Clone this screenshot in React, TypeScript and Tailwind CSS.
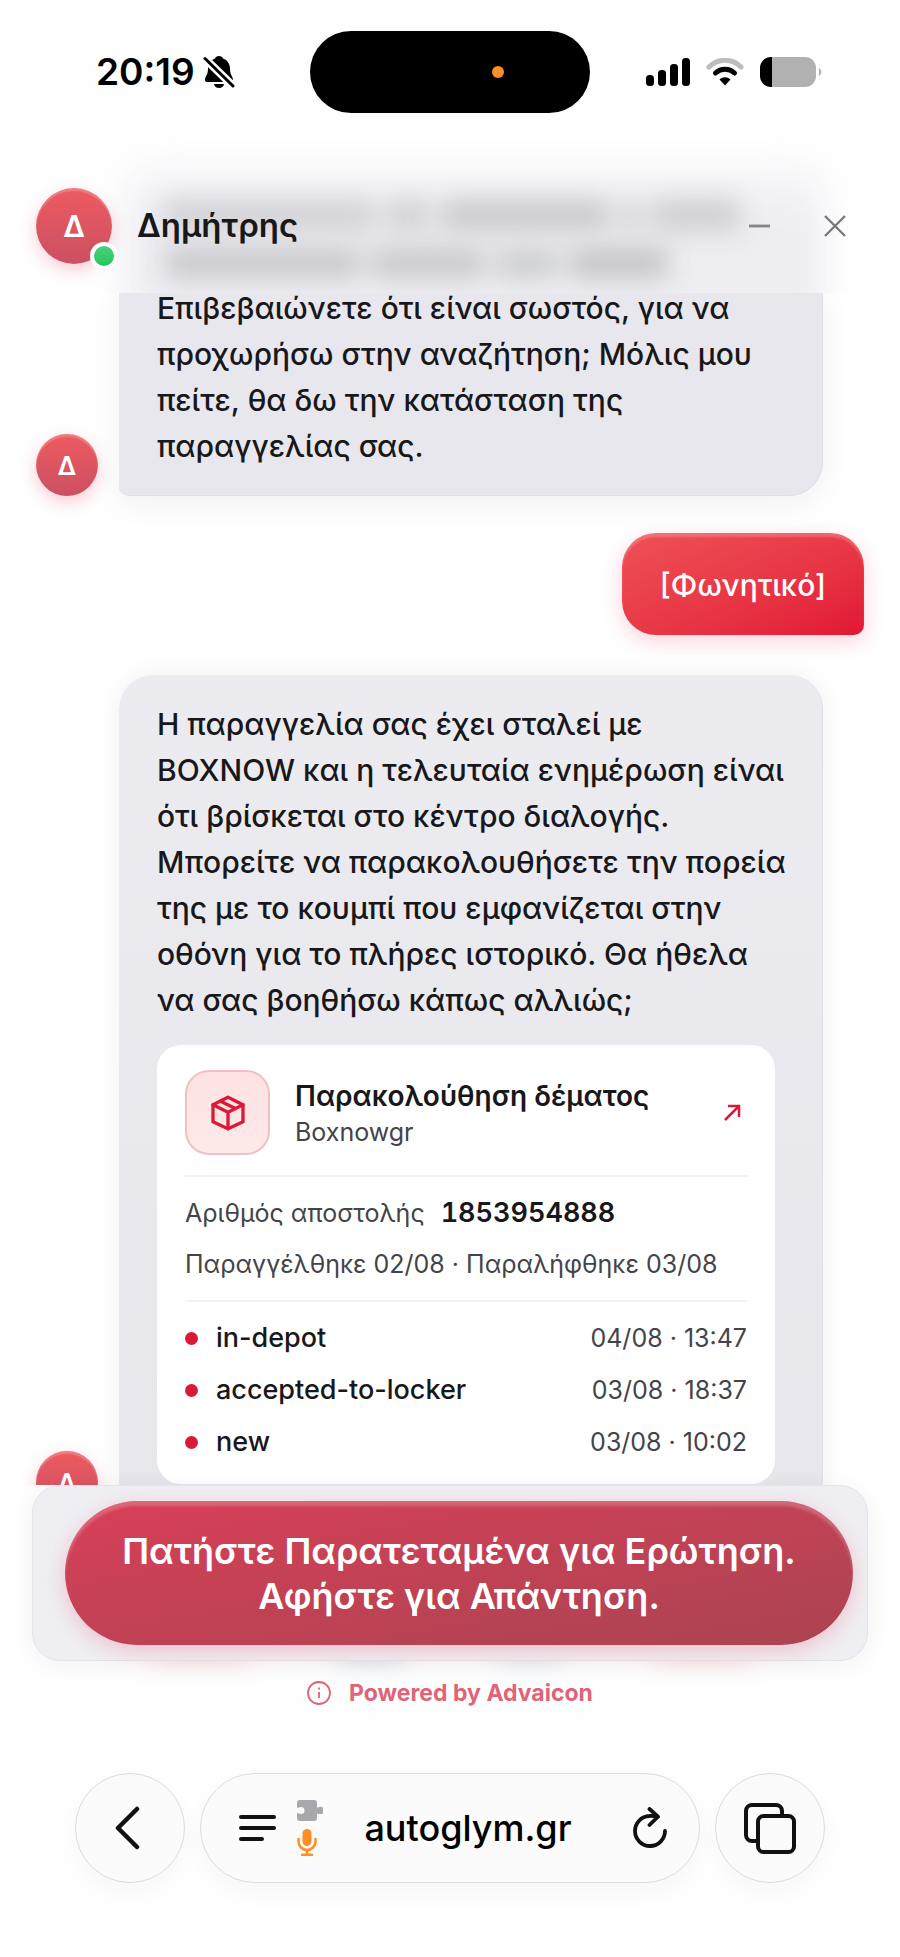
import React from "react";

const events = [
  { status: "in-depot", time: "04/08 · 13:47" },
  { status: "accepted-to-locker", time: "03/08 · 18:37" },
  { status: "new", time: "03/08 · 10:02" },
];

function StatusBar() {
  return (
    <div className="grid grid-cols-[1fr_auto_1fr] items-center pt-[31px]">
      <div className="flex items-center gap-2 pl-24">
        <span className="text-[37px] leading-[44px] font-semibold text-black">
          20:19
        </span>
        <svg width="32" height="34" viewBox="0 0 32 34" fill="black">
          <path d="M16 1c2 0 3.500 1 4 2.600 4.500 1.600 7 5.400 7 10.400 0 6 3 7.500 3 11 0 1.300-.7 2-2 2H4c-1.300 0-2-.8-2-2 0-3.500 3-5 3-11 0-5 2.500-8.800 7-10.400C12.500 2 14 1 16 1Z" />
          <path d="M11 29h10c-.4 2.500-2.400 4-5 4s-4.600-1.500-5-4Z" />
          <path d="M2 3.500 30 31" stroke="white" strokeWidth="8" />
          <path d="M2 3.500 30 31" stroke="black" strokeWidth="3" strokeLinecap="round" />
        </svg>
      </div>
      <div className="flex h-[82px] w-[280px] items-center justify-end rounded-full bg-black pr-[86px]">
        <span className="size-3 rounded-full bg-[#ff8d28]" />
      </div>
      <div className="flex items-center justify-end gap-4 pr-[78px]">
        <svg width="44" height="28" viewBox="0 0 44 28">
          <rect x="0" y="17" width="8" height="11" rx="3.500" />
          <rect x="12" y="12" width="8" height="16" rx="3.500" />
          <rect x="24" y="6" width="8" height="22" rx="3.500" />
          <rect x="36" y="0" width="8" height="28" rx="3.500" />
        </svg>
        <svg width="38" height="28" viewBox="0 0 38 28" fill="none">
          <path d="M3 9C12 0 26 0 35 9" stroke="#bdbdbd" strokeWidth="5" strokeLinecap="round" />
          <path d="M9.500 15c5.500-5 13.500-5 19 0" stroke="black" strokeWidth="5" strokeLinecap="round" />
          <path d="M13.500 21.500c3.300-3 7.700-3 11 0L19 27.500Z" fill="black" />
        </svg>
        <svg width="62" height="30" viewBox="0 0 62 30">
          <path d="M12 0v30h-1A11 11 0 0 1 0 19v-8A11 11 0 0 1 11 0Z" />
          <path d="M12 0h33a11 11 0 0 1 11 11v8a11 11 0 0 1-11 11H12Z" fill="#b1b1b1" />
          <path d="M59 11c3 1.500 3 6.500 0 8Z" fill="#b1b1b1" />
        </svg>
      </div>
    </div>
  );
}

function Avatar() {
  return (
    <div className="flex size-[62px] shrink-0 items-center justify-center rounded-full bg-linear-to-b from-[#ee5a60] to-[#cb5062] text-[26px] font-semibold text-white shadow-[inset_0_3px_1px_rgba(255,255,255,0.2),0_6px_16px_rgba(240,60,90,0.25)]">
      Δ
    </div>
  );
}

function ChatHeader() {
  return (
    <header className="relative z-10 flex h-[134px] items-center bg-[#fefefe] pr-[47px] pl-9">
      {/* message that has scrolled under the frosted bar */}
      <div className="absolute inset-x-0 -top-6 bottom-0 overflow-hidden" aria-hidden="true">
        <div className="absolute top-7 right-[78px] -bottom-6 left-[126px] rounded-t-[30px] bg-linear-to-b from-[#f8f8fa] to-[#ededf2] to-40% blur-[16px]" />
        <div className="absolute top-[64px] left-[164px] flex h-[32px] gap-3 blur-[12px]">
          <span className="w-[210px] bg-[#d2d2d6]" />
          <span className="w-[44px] bg-[#d2d2d6]" />
          <span className="w-[166px] bg-[#cacace]" />
          <span className="w-[20px] bg-[#d2d2d6]" />
          <span className="w-[88px] bg-[#cfcfd3]" />
        </div>
        <div className="absolute top-[112px] left-[166px] flex h-[32px] gap-3 blur-[12px]">
          <span className="w-[194px] bg-[#cacace]" />
          <span className="w-[112px] bg-[#cacace]" />
          <span className="w-[62px] bg-[#cecfd2]" />
          <span className="w-[98px] bg-[#c6c6ca]" />
        </div>
      </div>
      <div className="relative">
        <div className="flex size-[76px] items-center justify-center rounded-full bg-linear-to-b from-[#ee5a60] to-[#cb5062] text-[30px] font-semibold text-white shadow-[inset_0_3px_1px_rgba(255,255,255,0.2),0_6px_16px_rgba(240,60,90,0.25)]">
          Δ
        </div>
        <span className="absolute -right-[6px] -bottom-[6px] size-7 rounded-full border-4 border-white bg-linear-to-b from-[#4bd07c] to-[#22c55e]" />
      </div>
      <h1 className="relative ml-[25px] flex-1 text-[33px] font-semibold text-[#18181b]">
        Δημήτρης
      </h1>
      <div className="relative flex items-center gap-10">
        <button aria-label="Minimize" className="p-1">
          <svg width="28" height="28" viewBox="0 0 28 28" stroke="#858585" strokeWidth="2.800">
            <path d="M4 14h21" />
          </svg>
        </button>
        <button aria-label="Close" className="p-1">
          <svg width="28" height="28" viewBox="0 0 28 28" stroke="#777" strokeWidth="2.300">
            <path d="m4 4 20 20M24 4 4 24" />
          </svg>
        </button>
      </div>
    </header>
  );
}

function TrackingCard() {
  return (
    <div className="mt-[22px] mr-[13px] rounded-[24px] bg-white px-7 pt-[25px] pb-4 font-normal">
      <div className="flex items-center pb-5">
        <div className="flex size-[85px] items-center justify-center rounded-[24px] border-2 border-[#f3bfc4] bg-linear-to-b from-[#fee2e2] to-[#feeaea]">
          <svg
            width="40"
            height="40"
            viewBox="0 0 24 24"
            fill="none"
            stroke="#dc1838"
            strokeWidth="2"
            strokeLinejoin="round"
            strokeLinecap="round"
          >
            <path d="M12 2.500 21 7v10.300L12 21.500 3 17.300V7Z" />
            <path d="m3 7 9 4.500L21 7M12 11.500v10M7.500 4.900l9 4.400" />
          </svg>
        </div>
        <div className="ml-[25px] flex-1">
          <h2 className="text-[28px] leading-[38px] font-semibold text-[#18181b]">
            Παρακολούθηση δέματος
          </h2>
          <p className="text-[25px] leading-[34px] text-[#444448]">Boxnowgr</p>
        </div>
        <a href="#" aria-label="Άνοιγμα" className="mr-[6px]">
          <svg width="18" height="18" viewBox="0 0 18 18" fill="none" stroke="#dc1838" strokeWidth="2.500">
            <path d="M2 16 16 2M5 2h11v11" />
          </svg>
        </a>
      </div>
      <div className="flex flex-col gap-[15px] border-y-2 border-[#f1f1f3] py-[18px] text-[25px] leading-[36px] text-[#444448]">
        <p>
          Αριθμός αποστολής
          <strong className="ml-4 text-[27px] font-semibold text-[#18181b] tabular-nums">
            1853954888
          </strong>
        </p>
        <p>Παραγγέλθηκε 02/08 · Παραλήφθηκε 03/08</p>
      </div>
      <ul className="pt-[10px]">
        {events.map((e) => (
          <li key={e.status} className="flex h-[52px] items-center">
            <span className="size-[13px] rounded-full bg-[#dc1838]" />
            <span className="ml-[18px] flex-1 text-[27px] font-medium text-[#18181b]">
              {e.status}
            </span>
            <time className="text-[25px] text-[#444448]">{e.time}</time>
          </li>
        ))}
      </ul>
    </div>
  );
}

function BrowserBar() {
  return (
    <nav className="mx-auto flex w-full max-w-[750px] gap-[15px]">
      <button
        aria-label="Back"
        className="flex size-[110px] shrink-0 items-center justify-center rounded-full border border-[#dcdcdc] bg-[#fbfbfb] shadow-[0_10px_24px_rgba(0,0,0,0.03)]"
      >
        <svg width="30" height="44" viewBox="0 0 30 44" fill="none" stroke="#111" strokeWidth="4.500" strokeLinecap="round" strokeLinejoin="round">
          <path d="M22 3 3 22l19 19" />
        </svg>
      </button>
      <div className="flex h-[110px] flex-1 items-center rounded-full border border-[#dcdcdc] bg-[#fbfbfb] pr-8 pl-[38px] shadow-[0_10px_24px_rgba(0,0,0,0.03)]">
        <button aria-label="Page menu">
          <svg width="37" height="28" viewBox="0 0 37 28" stroke="#111" strokeWidth="4" strokeLinecap="round">
            <path d="M2 3h33M2 14h33M2 25h21" />
          </svg>
        </button>
        <div className="ml-[21px] flex flex-col gap-2">
          <svg width="26" height="21" viewBox="0 0 26 21" fill="#a8a8ac">
            <path d="M3 0h14a3 3 0 0 1 3 3v4.500c1 .4 1.500-.8 3-.8a3.500 3.500 0 0 1 0 7.600c-1.500 0-2-1.200-3-.8V18a3 3 0 0 1-3 3H3a3 3 0 0 1-3-3v-4.800c1.300-.5 2 .8 4 .8a3.500 3.500 0 0 0 0-7C2 7 1.300 8.200 0 7.700V3a3 3 0 0 1 3-3Z" />
          </svg>
          <svg width="20" height="27" viewBox="0 0 20 27" fill="none" stroke="#ff8d28" strokeWidth="2.500" strokeLinecap="round">
            <rect x="5.500" y="0" width="9" height="17" rx="4.500" fill="#ff8d28" stroke="none" />
            <path d="M1.500 10v2.500a8.500 8.500 0 0 0 17 0V10M10 21v4.500M5 25.700h10" />
          </svg>
        </div>
        <span className="flex-1 pr-5 text-center text-[36px] font-medium text-black">
          autoglym.gr
        </span>
        <button aria-label="Reload">
          <svg width="34" height="42" viewBox="0 0 34 42" fill="none" stroke="#111" strokeWidth="3.800" strokeLinecap="round" strokeLinejoin="round">
            <path d="M24 9.600c-3-.6-5-.8-7.500-.6A15 15 0 1 0 32 24M16.500 2l8.500 7.700-8.500 8.300" />
          </svg>
        </button>
      </div>
      <button
        aria-label="Tabs"
        className="flex size-[110px] shrink-0 items-center justify-center rounded-full border border-[#dcdcdc] bg-[#fbfbfb] shadow-[0_10px_24px_rgba(0,0,0,0.03)]"
      >
        <svg width="52" height="51" viewBox="0 0 52 51" fill="none" stroke="#111" strokeWidth="4" strokeLinejoin="round">
          <path d="M13 38H8A6 6 0 0 1 2 32V8a6 6 0 0 1 6-6h24a6 6 0 0 1 6 6v4" />
          <rect x="14" y="13" width="36" height="36" rx="5.500" />
        </svg>
      </button>
    </nav>
  );
}

export default function App() {
  return (
    <div className="min-h-screen bg-[#fefefe] pb-[75px] font-['Inter',sans-serif]">
      <StatusBar />
      <div className="h-[46px]" />
      <ChatHeader />

      <main className="-mt-2 h-[1200px] overflow-hidden px-9">
        <div className="flex items-end gap-[21px]">
          <Avatar />
          <div className="mr-[41px] flex-1 rounded-br-[34px] rounded-bl-[10px] border-r border-b border-[#dedee3] bg-[#e8e7ed] pr-[34px] pb-[26px] pl-[38px] text-[30px] leading-[46px] font-medium text-[#18181b] shadow-[0_8px_30px_rgba(0,0,0,0.05)]">
            Επιβεβαιώνετε ότι είναι σωστός, για να προχωρήσω στην αναζήτηση;
            Μόλις μου πείτε, θα δω την κατάσταση της παραγγελίας σας.
          </div>
        </div>

        <div className="mt-[37px] flex justify-end">
          <div className="rounded-[34px] rounded-br-[10px] bg-linear-to-br from-[#ef5057] to-[#e21535] px-[38px] pt-[29px] pb-[27px] text-[30px] leading-[46px] font-medium text-white shadow-[inset_0_4px_2px_rgba(255,255,255,0.2),0_6px_20px_rgba(240,40,80,0.2)]">
            [Φωνητικό]
          </div>
        </div>

        <div className="mt-10 flex items-end gap-[21px]">
          <Avatar />
          <div className="mr-[41px] flex-1 rounded-[34px] rounded-bl-[10px] border-r border-[#dedee3] bg-linear-to-b from-[#ecebf0] to-[#e7e6ec] pt-[26px] pr-[34px] pb-[29px] pl-[38px] text-[30px] leading-[46px] font-medium text-[#18181b] shadow-[0_0_24px_rgba(0,0,0,0.05)]">
            Η παραγγελία σας έχει σταλεί με BOXNOW και η τελευταία ενημέρωση
            είναι ότι βρίσκεται στο κέντρο διαλογής. Μπορείτε να
            παρακολουθήσετε την πορεία της με το κουμπί που εμφανίζεται στην
            οθόνη για το πλήρες ιστορικό. Θα ήθελα να σας βοηθήσω κάπως αλλιώς;
            <TrackingCard />
          </div>
        </div>
      </main>

      <footer className="relative px-8">
        {/* soft glow that shows below the panel */}
        <div className="absolute inset-x-[150px] top-[140px] flex h-9 justify-between blur-[14px]" aria-hidden="true">
          <span className="w-24 bg-[#fce0e5]" />
          <span className="w-16 bg-[#d5e2ec]" />
          <span className="w-16 bg-[#e0e9f0]" />
          <span className="w-24 bg-[#fce0e5]" />
        </div>
        <div className="relative rounded-[28px] border border-[#e4e4e9] bg-[#efeff3] pt-[15px] pr-[14px] pb-[15px] pl-8 shadow-[0_4px_24px_rgba(0,0,0,0.05)]">
          <button className="w-full rounded-full bg-linear-to-br from-[#d83f58] to-[#aa4351] px-8 pt-7 pb-[26px] text-[36px] leading-[45px] font-semibold text-white shadow-[inset_0_5px_3px_rgba(255,255,255,0.2),0_6px_20px_rgba(240,60,90,0.25)]">
            Πατήστε Παρατεταμένα για Ερώτηση.
            <br />
            Αφήστε για Απάντηση.
          </button>
        </div>
        <a
          href="#"
          className="relative mt-4 flex h-8 items-center justify-center gap-[18px] text-[23px] font-bold text-[#e06377]"
        >
          <svg width="24" height="24" viewBox="0 0 24 24" fill="none" stroke="#e06377" strokeWidth="1.800">
            <circle cx="12" cy="12" r="11" />
            <path d="M12 11v6M12 6.500v2" />
          </svg>
          Powered by Advaicon
        </a>
      </footer>

      <div className="h-16" />
      <BrowserBar />
    </div>
  );
}
